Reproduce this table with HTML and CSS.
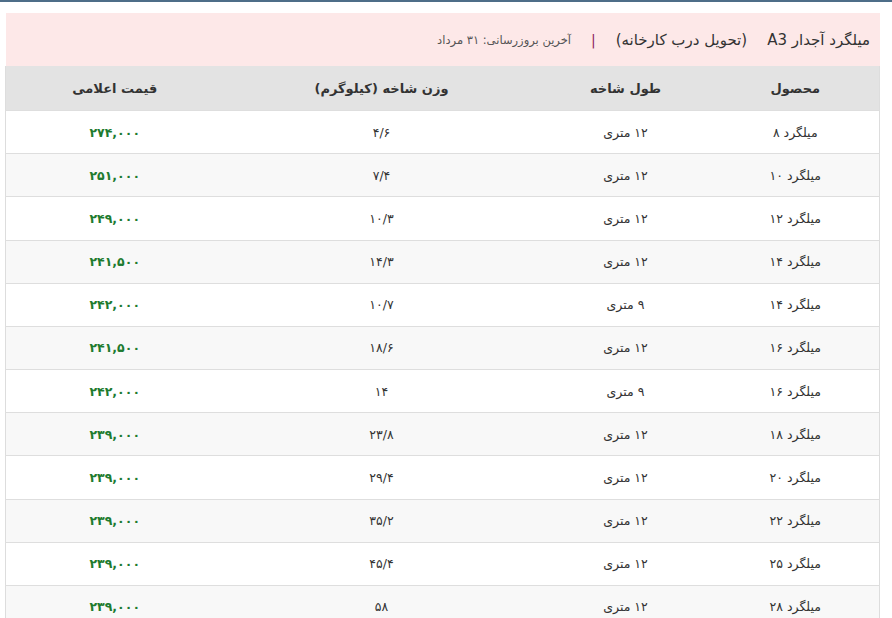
FILE: index.html
```html
<!DOCTYPE html>
<html lang="fa" dir="rtl">
<head>
<meta charset="utf-8">
<link rel="stylesheet" href="styles.css">
</head>
<body>
<div class="topline"></div>
<div class="wrap">
  <div class="banner">
    <span class="title">میلگرد آجدار A3</span>
    <span class="sub">(تحویل درب کارخانه)</span>
    <span class="sep">|</span>
    <span class="date">آخرین بروزرسانی: ۳۱ مرداد</span>
  </div>
  <table class="prices">
    <colgroup>
      <col class="c1"><col class="c2"><col class="c3"><col class="c4">
    </colgroup>
    <thead>
      <tr><th>محصول</th><th>طول شاخه</th><th>وزن شاخه (کیلوگرم)</th><th>قیمت اعلامی</th></tr>
    </thead>
    <tbody>
      <tr><td>میلگرد ۸</td><td>۱۲ متری</td><td>۴/۶</td><td class="price">۲۷۴,۰۰۰</td></tr>
      <tr><td>میلگرد ۱۰</td><td>۱۲ متری</td><td>۷/۴</td><td class="price">۲۵۱,۰۰۰</td></tr>
      <tr><td>میلگرد ۱۲</td><td>۱۲ متری</td><td>۱۰/۳</td><td class="price">۲۴۹,۰۰۰</td></tr>
      <tr><td>میلگرد ۱۴</td><td>۱۲ متری</td><td>۱۴/۳</td><td class="price">۲۴۱,۵۰۰</td></tr>
      <tr><td>میلگرد ۱۴</td><td>۹ متری</td><td>۱۰/۷</td><td class="price">۲۴۲,۰۰۰</td></tr>
      <tr><td>میلگرد ۱۶</td><td>۱۲ متری</td><td>۱۸/۶</td><td class="price">۲۴۱,۵۰۰</td></tr>
      <tr><td>میلگرد ۱۶</td><td>۹ متری</td><td>۱۴</td><td class="price">۲۴۲,۰۰۰</td></tr>
      <tr><td>میلگرد ۱۸</td><td>۱۲ متری</td><td>۲۳/۸</td><td class="price">۲۳۹,۰۰۰</td></tr>
      <tr><td>میلگرد ۲۰</td><td>۱۲ متری</td><td>۲۹/۴</td><td class="price">۲۳۹,۰۰۰</td></tr>
      <tr><td>میلگرد ۲۲</td><td>۱۲ متری</td><td>۳۵/۲</td><td class="price">۲۳۹,۰۰۰</td></tr>
      <tr><td>میلگرد ۲۵</td><td>۱۲ متری</td><td>۴۵/۴</td><td class="price">۲۳۹,۰۰۰</td></tr>
      <tr><td>میلگرد ۲۸</td><td>۱۲ متری</td><td>۵۸</td><td class="price">۲۳۹,۰۰۰</td></tr>
    </tbody>
  </table>
</div>
</body>
</html>
```
FILE: styles.css
```css
html, body {
  margin: 0;
  padding: 0;
  background: #ffffff;
}
body {
  font-family: "DejaVu Sans", "Liberation Sans", sans-serif;
  color: #333333;
  overflow: hidden;
}
.topline {
  height: 2px;
  background: #4e6d88;
}
.wrap {
  padding: 11px 12px 0 6px;
}
.banner {
  background: #fde8e8;
  height: 53px;
  display: flex;
  align-items: center;
  padding-right: 10px;
}
.title {
  font-size: 15px;
  color: #333;
  margin-left: 20px;
}
.sub {
  font-size: 15px;
  color: #333;
}
.sep {
  color: #8a1f5c;
  font-size: 14px;
  margin: 0 20px 0 20px;
}
.date {
  font-size: 11.5px;
  color: #555;
}
.prices {
  width: 874px;
  border-collapse: collapse;
  border-left: 1px solid #dddddd;
  border-right: 1px solid #dddddd;
  table-layout: fixed;
}
.c1 { width: 168px; }
.c2 { width: 172px; }
.c3 { width: 316px; }
.c4 { width: 218px; }
.prices th {
  background: #e3e3e3;
  height: 44px;
  font-size: 13px;
  font-weight: bold;
  color: #333;
  text-align: center;
  padding: 0;
}
.prices td {
  height: 42.18px;
  border-top: 1px solid #dedede;
  font-size: 12.5px;
  color: #333;
  text-align: center;
  padding: 0;
}
.prices tbody tr:nth-child(even) td {
  background: #f8f8f8;
}
.prices td.price {
  color: #1e7b2f;
  font-weight: bold;
}
```
